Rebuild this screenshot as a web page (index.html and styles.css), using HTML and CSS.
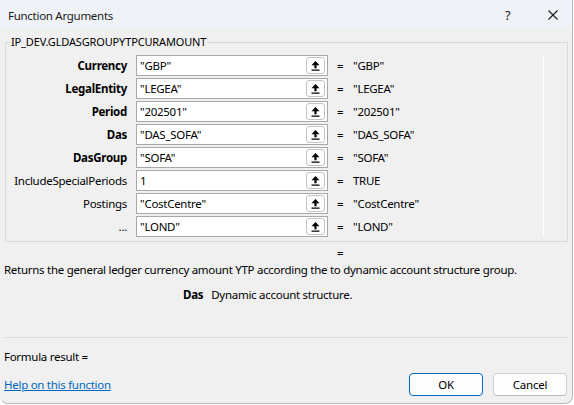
FILE: index.html
```html
<!DOCTYPE html>
<html>
<head>
<meta charset="utf-8">
<link rel="stylesheet" href="styles.css">
</head>
<body>
<div class="dialog">
  <div class="titlebar">
    <span class="title">Function Arguments</span>
    <span class="help">?</span>
    <span class="close"><svg width="10" height="10" viewBox="0 0 10 10"><path d="M0.5 0.5 L9.5 9.5 M9.5 0.5 L0.5 9.5" stroke="#1a1a1a" stroke-width="1.1" fill="none"/></svg></span>
  </div>
  <fieldset class="group">
    <legend>IP_DEV.GLDASGROUPYTPCURAMOUNT</legend>
    <div class="rows">
      <div class="row"><span class="lbl req">Currency</span><div class="field"><span class="val">"GBP"</span><span class="ref"><svg width="9" height="10" viewBox="0 0 9 10"><path d="M4.5 0 L8.5 4.2 L5.6 4.2 L5.6 7.2 L3.4 7.2 L3.4 4.2 L0.5 4.2 Z M0.5 8.6 H8.5 V9.8 H0.5 Z" fill="#000"/></svg></span></div><span class="eq">=</span><span class="res">"GBP"</span></div>
      <div class="row"><span class="lbl req">LegalEntity</span><div class="field"><span class="val">"LEGEA"</span><span class="ref"><svg width="9" height="10" viewBox="0 0 9 10"><path d="M4.5 0 L8.5 4.2 L5.6 4.2 L5.6 7.2 L3.4 7.2 L3.4 4.2 L0.5 4.2 Z M0.5 8.6 H8.5 V9.8 H0.5 Z" fill="#000"/></svg></span></div><span class="eq">=</span><span class="res">"LEGEA"</span></div>
      <div class="row"><span class="lbl req">Period</span><div class="field"><span class="val">"202501"</span><span class="ref"><svg width="9" height="10" viewBox="0 0 9 10"><path d="M4.5 0 L8.5 4.2 L5.6 4.2 L5.6 7.2 L3.4 7.2 L3.4 4.2 L0.5 4.2 Z M0.5 8.6 H8.5 V9.8 H0.5 Z" fill="#000"/></svg></span></div><span class="eq">=</span><span class="res">"202501"</span></div>
      <div class="row"><span class="lbl req">Das</span><div class="field"><span class="val">"DAS_SOFA"</span><span class="ref"><svg width="9" height="10" viewBox="0 0 9 10"><path d="M4.5 0 L8.5 4.2 L5.6 4.2 L5.6 7.2 L3.4 7.2 L3.4 4.2 L0.5 4.2 Z M0.5 8.6 H8.5 V9.8 H0.5 Z" fill="#000"/></svg></span></div><span class="eq">=</span><span class="res">"DAS_SOFA"</span></div>
      <div class="row"><span class="lbl req">DasGroup</span><div class="field"><span class="val">"SOFA"</span><span class="ref"><svg width="9" height="10" viewBox="0 0 9 10"><path d="M4.5 0 L8.5 4.2 L5.6 4.2 L5.6 7.2 L3.4 7.2 L3.4 4.2 L0.5 4.2 Z M0.5 8.6 H8.5 V9.8 H0.5 Z" fill="#000"/></svg></span></div><span class="eq">=</span><span class="res">"SOFA"</span></div>
      <div class="row"><span class="lbl">IncludeSpecialPeriods</span><div class="field"><span class="val">1</span><span class="ref"><svg width="9" height="10" viewBox="0 0 9 10"><path d="M4.5 0 L8.5 4.2 L5.6 4.2 L5.6 7.2 L3.4 7.2 L3.4 4.2 L0.5 4.2 Z M0.5 8.6 H8.5 V9.8 H0.5 Z" fill="#000"/></svg></span></div><span class="eq">=</span><span class="res">TRUE</span></div>
      <div class="row"><span class="lbl">Postings</span><div class="field"><span class="val">"CostCentre"</span><span class="ref"><svg width="9" height="10" viewBox="0 0 9 10"><path d="M4.5 0 L8.5 4.2 L5.6 4.2 L5.6 7.2 L3.4 7.2 L3.4 4.2 L0.5 4.2 Z M0.5 8.6 H8.5 V9.8 H0.5 Z" fill="#000"/></svg></span></div><span class="eq">=</span><span class="res">"CostCentre"</span></div>
      <div class="row"><span class="lbl">...</span><div class="field"><span class="val">"LOND"</span><span class="ref"><svg width="9" height="10" viewBox="0 0 9 10"><path d="M4.5 0 L8.5 4.2 L5.6 4.2 L5.6 7.2 L3.4 7.2 L3.4 4.2 L0.5 4.2 Z M0.5 8.6 H8.5 V9.8 H0.5 Z" fill="#000"/></svg></span></div><span class="eq">=</span><span class="res">"LOND"</span></div>
    </div>
  </fieldset>
  <div class="eqline">=</div>
  <p class="desc">Returns the general ledger currency amount YTP according the to dynamic account structure group.</p>
  <p class="argdesc"><b class="argname">Das</b><span>Dynamic account structure.</span></p>
  <div class="sep"></div>
  <div class="result">Formula result =</div>
  <div class="footer">
    <a class="helplink" href="#">Help on this function</a>
    <div class="buttons">
      <button class="btn ok">OK</button>
      <button class="btn">Cancel</button>
    </div>
  </div>
</div>
</body>
</html>
```

FILE: styles.css
```css
html, body {
  margin: 0;
  padding: 0;
  background: #ffffff;
}
body {
  font-family: "Noto Sans", "Open Sans", sans-serif;
  font-size: 11.5px;
  letter-spacing: -0.28px;
  color: #000;
}
.dialog {
  width: 572px;
  height: 403px;
  background: #f0f0f0;
  border-right: 1px solid #b8b8b8;
  border-bottom: 1px solid #b8b8b8;
  border-radius: 0 0 8px 8px;
  overflow: hidden;
  display: flex;
  flex-direction: column;
}
.titlebar {
  height: 29px;
  flex: none;
  background: #eff2f7;
  display: flex;
  align-items: center;
  padding: 1px 0 0 8px;
  box-sizing: border-box;
}
.title {
  flex: 1;
  color: #1a1a1a;
}
.help {
  width: 8px;
  font-size: 13px;
  margin-right: 35px;
  color: #1a1a1a;
}
.close {
  display: flex;
  margin-right: 14px;
}
.group {
  width: 563px;
  box-sizing: border-box;
  margin: 6px 0 0 5px;
  padding: 6px 0 4px 0;
  border: 1px solid #d8d8d8;
  min-width: 0;
}
.group legend {
  margin-left: 4px;
  padding: 0 1px;
  line-height: 14px;
  font-size: 11px;
  letter-spacing: -0.15px;
}
.rows {
  width: 538px;
  box-sizing: border-box;
  border-right: 1px solid #ffffff;
  display: flex;
  flex-direction: column;
  gap: 2px;
}
.row {
  height: 21px;
  display: flex;
  align-items: center;
}
.lbl {
  width: 121px;
  text-align: right;
  margin-right: 9px;
  white-space: nowrap;
}
.lbl.req {
  font-weight: bold;
}
.field {
  width: 192px;
  height: 21px;
  box-sizing: border-box;
  border: 1px solid #a8a8a8;
  background: #fff;
  display: flex;
  align-items: center;
}
.val {
  flex: 1;
  padding-left: 3px;
}
.ref {
  width: 19px;
  height: 17px;
  box-sizing: border-box;
  margin-right: 2px;
  border: 1px solid #c4c4c4;
  border-radius: 3px;
  background: #fdfdfd;
  display: flex;
  align-items: center;
  justify-content: center;
}
.eq {
  width: 16px;
  margin-left: 9px;
}
.res {
  white-space: nowrap;
}
.eqline {
  margin: 3px 0 0 337px;
  line-height: 16px;
}
.desc {
  margin: 1px 0 0 4px;
  line-height: 16px;
}
.argdesc {
  margin: 9px 0 0 183px;
  line-height: 16px;
  display: flex;
  gap: 8px;
}
.sep {
  height: 1px;
  margin: 34px 5px 0 4px;
  background: #d9d9d9;
}
.result {
  margin: 11px 0 0 4px;
  line-height: 16px;
}
.footer {
  margin-top: 8px;
  display: flex;
  align-items: center;
  justify-content: space-between;
  padding: 0 5px 0 4px;
}
.helplink {
  color: #0067c0;
  text-decoration: underline;
}
.buttons {
  display: flex;
  gap: 10px;
}
.btn {
  width: 74px;
  height: 23px;
  font-family: inherit;
  font-size: 11.5px;
  letter-spacing: -0.25px;
  background: #fdfdfd;
  border: 1px solid #d0d0d0;
  border-bottom-color: #b8b8b8;
  border-radius: 4px;
  padding: 0;
  color: #000;
}
.btn.ok {
  border: 1px solid #0067c0;
}
```
